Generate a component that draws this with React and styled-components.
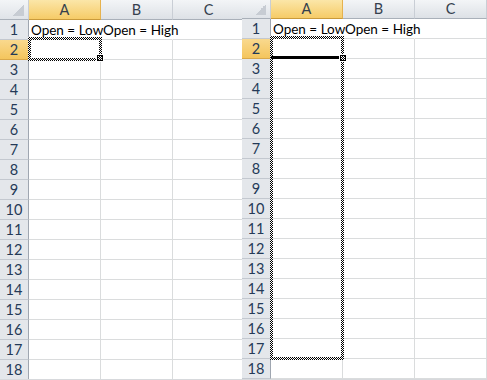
import React from "react";
import styled, { createGlobalStyle, css } from "styled-components";

const GlobalStyle = createGlobalStyle`
  html, body { margin: 0; padding: 0; background: #fff; overflow: hidden; }
  * { box-sizing: border-box; }
`;

const Page = styled.div`
  display: flex;
  width: 487px;
  height: 380px;
  background: #fff;
  font-family: Lato, "Open Sans", "Liberation Sans", sans-serif;
`;

const Sheet = styled.div`
  position: relative;
  flex: none;
  width: ${(p) => p.$width}px;
  height: 380px;
  overflow: hidden;
  display: grid;
  grid-template-columns: 29px 72px 72px 72px;
  grid-template-rows: ${(p) => p.$headH}px repeat(18, 20px);
  background: #fff;
  border-bottom: 1px solid #d7d9dc;
`;

const headerBase = css`
  display: flex;
  align-items: center;
  justify-content: center;
  font-size: 14.5px;
  line-height: 1;
`;

const Corner = styled.div`
  position: relative;
  background: linear-gradient(#f3f5f7, #dfe3e8);
  border-right: 1px solid #c9ced5;
  border-bottom: 1px solid #a9b0b9;
`;

const CornerTriangle = styled.div`
  position: absolute;
  right: 4px;
  bottom: 3px;
  width: 11px;
  height: 11px;
  background: linear-gradient(to bottom right, transparent 50%, #c7ccd3 50%);
`;

const ColHeader = styled.div`
  ${headerBase};
  color: #35404d;
  padding-top: 1px;
  background: ${(p) =>
    p.$selected
      ? "linear-gradient(#fbe6a8, #f6cb67)"
      : "linear-gradient(#f3f5f7, #dde1e6)"};
  border-right: 1px solid ${(p) => (p.$selected ? "#e6b24e" : "#c9ced5")};
  border-bottom: 1px solid ${(p) => (p.$selected ? "#c99a3b" : "#a9b0b9")};
`;

const RowHeader = styled.div`
  ${headerBase};
  color: #243a57;
  padding-top: 2px;
  background: ${(p) =>
    p.$selected ? "linear-gradient(#f9d98e, #f4c55d)" : "#e4e7eb"};
  border-right: 1px solid #9fa6b0;
  border-bottom: 1px solid ${(p) => (p.$selected ? "#d9a84a" : "#c3c8cf")};
`;

const Cell = styled.div`
  position: relative;
  display: flex;
  align-items: flex-end;
  padding: 0 0 2px 2px;
  font-size: 13.5px;
  line-height: 1;
  color: #000;
  white-space: nowrap;
  overflow: visible;
  z-index: ${(p) => (p.$text ? 1 : 0)};
  border-right: 1px solid ${(p) => (p.$open ? "transparent" : "#dadcdd")};
  border-bottom: 1px solid #dadcdd;
`;

const Ants = styled.div`
  position: absolute;
  z-index: 3;
  left: ${(p) => p.$x}px;
  top: ${(p) => p.$y}px;
  width: ${(p) => p.$w}px;
  height: ${(p) => p.$h}px;
  padding: 3px;
  background: repeating-conic-gradient(#000 0 25%, #fff 0 50%) 0 0 / 2px 2px;
  -webkit-mask: linear-gradient(#000 0 0) content-box, linear-gradient(#000 0 0);
  -webkit-mask-composite: xor;
  mask-composite: exclude;
`;

const ActiveLine = styled.div`
  position: absolute;
  z-index: 4;
  left: ${(p) => p.$x}px;
  top: ${(p) => p.$y}px;
  width: ${(p) => p.$w}px;
  height: 3px;
  background: #000;
`;

const Handle = styled.div`
  position: absolute;
  z-index: 5;
  left: ${(p) => p.$x}px;
  top: ${(p) => p.$y}px;
  width: 6px;
  height: 6px;
  border: 1px solid #000;
  background: repeating-conic-gradient(#000 0 25%, #fff 0 50%) 0 0 / 2px 2px;
  outline: 1px solid #fff;
`;

const cols = ["A", "B", "C"];
const rows = Array.from({ length: 18 }, (_, i) => i + 1);

function Grid() {
  return (
    <>
      <Corner>
        <CornerTriangle />
      </Corner>
      {cols.map((c) => (
        <ColHeader key={c} $selected={c === "A"}>
          {c}
        </ColHeader>
      ))}
      {rows.map((r) => (
        <React.Fragment key={r}>
          <RowHeader $selected={r === 2}>{r}</RowHeader>
          {cols.map((c) => {
            const text =
              r === 1 && c === "A"
                ? "Open = Low"
                : r === 1 && c === "B"
                ? "Open = High"
                : null;
            return (
              <Cell key={c} $text={!!text} $open={r === 1 && c !== "C"}>
                {text}
              </Cell>
            );
          })}
        </React.Fragment>
      ))}
    </>
  );
}

export default function App() {
  return (
    <Page>
      <GlobalStyle />
      <Sheet $width={242} $headH={20}>
        <Grid />
        <Ants $x={28} $y={37} $w={74} $h={24} />
        <Handle $x={97} $y={55} />
      </Sheet>
      <Sheet $width={245} $headH={19}>
        <Grid />
        <Ants $x={28} $y={36} $w={74} $h={324} />
        <ActiveLine $x={29} $y={56} $w={70} />
        <Handle $x={98} $y={55} />
      </Sheet>
    </Page>
  );
}
